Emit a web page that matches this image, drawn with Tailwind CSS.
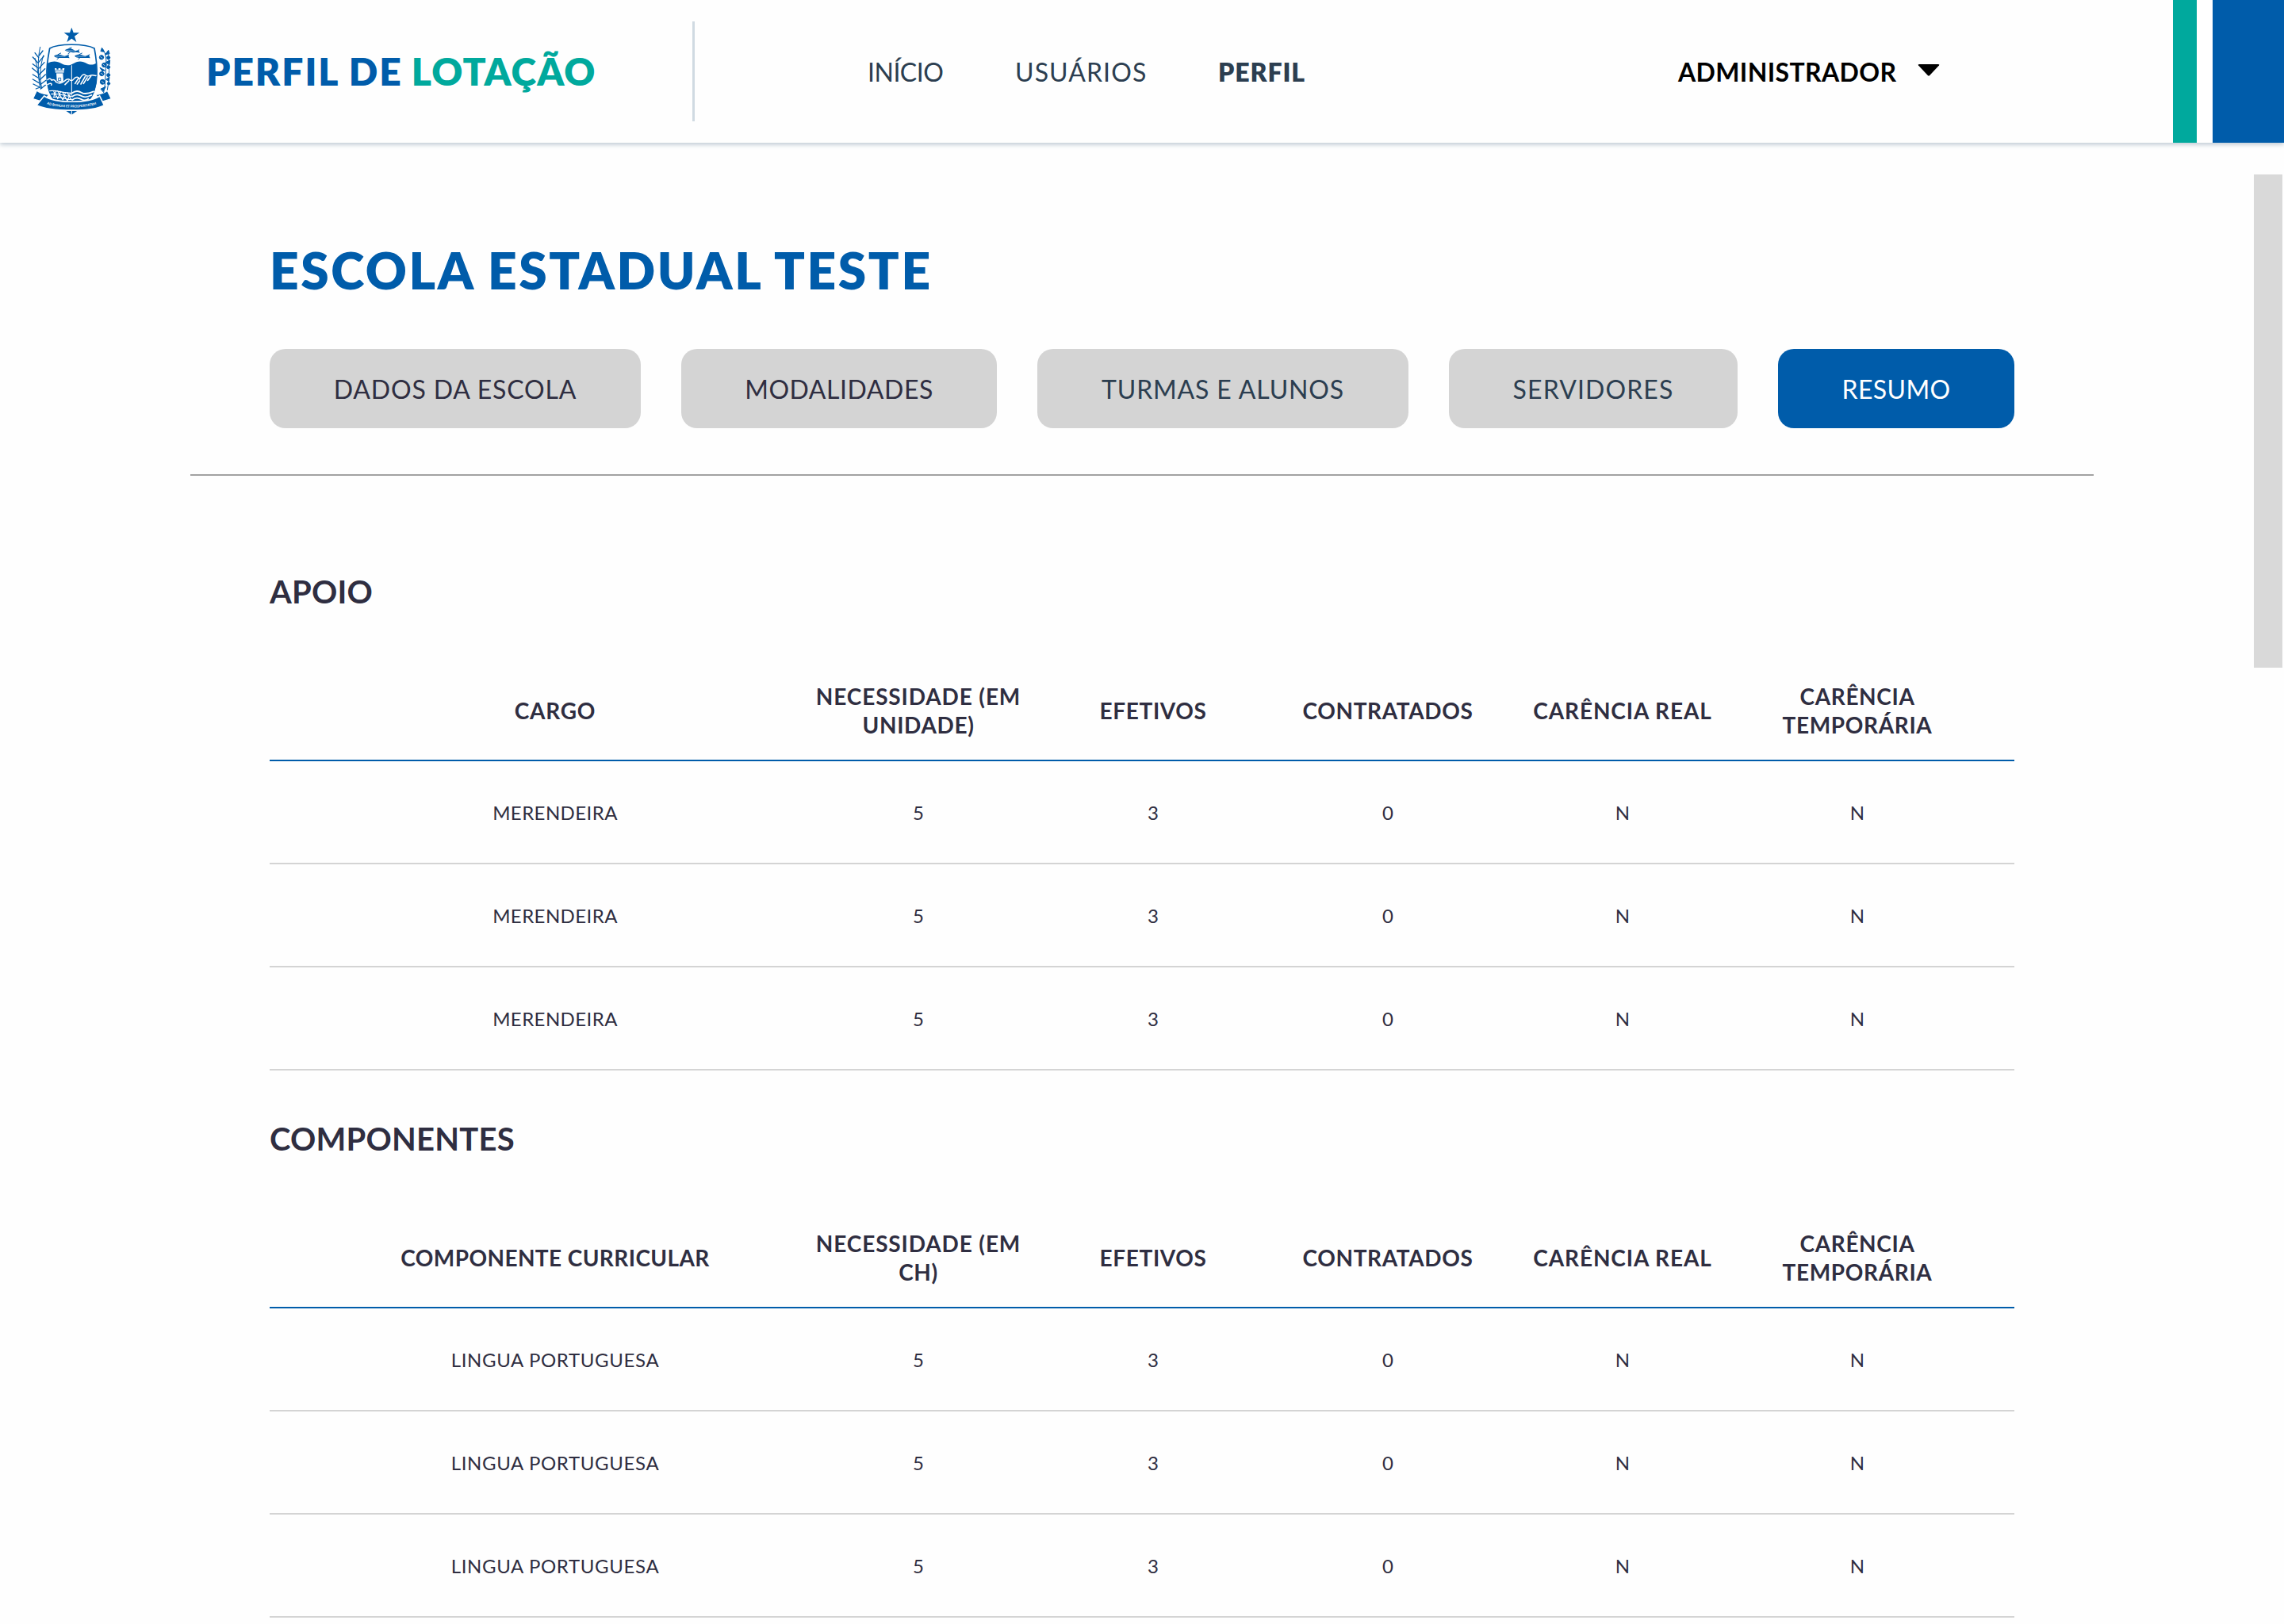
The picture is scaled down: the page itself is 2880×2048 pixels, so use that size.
<!DOCTYPE html>
<html lang="pt-BR">
<head>
<meta charset="utf-8">
<title>Perfil de Lotação</title>
<script src="https://cdn.jsdelivr.net/npm/@tailwindcss/browser@4"></script>
</head>
<body class="h-[2048px] w-[2880px] overflow-hidden bg-[#fefefe] font-['Lato','Noto_Sans',sans-serif] text-[#2f2e41]">

<header class="flex h-[180px] items-center shadow-[0_2px_6px_#b8c5cf] text-[32px] text-[#2c3e50]">
  <svg class="ml-5 size-[140px] shrink-0" viewBox="0 0 420 420" fill="none" stroke-linecap="round">
    <polygon fill="#005caa" points="211,44 218,64 240,64 222,77 229,99 211,86 193,99 200,77 182,64 204,64"/>
    <!-- shield -->
    <path fill="#005caa" d="M120 180C140 168 158 172 172 180C188 189 204 189 220 179C238 168 254 172 268 180C280 187 292 186 304 179C308 230 306 262 296 290C280 330 245 350 211 374C177 350 142 330 126 290C116 262 116 230 120 180Z"/>
    <path stroke="#005caa" stroke-width="5" d="M128 123C160 104 262 104 297 123C304 160 308 190 306 226C305 262 296 294 272 316M128 123C121 160 115 190 117 226C118 262 126 294 150 316"/>
    <!-- fish -->
    <g fill="#005caa">
      <path d="M185 130C194 123 208 121 216 127C224 133 230 134 241 125L238 132L242 140C232 136 222 140 212 138C202 136 194 137 185 130Z"/>
      <path d="M144 152C153 145 167 145 176 149C184 153 192 152 202 145L199 152L203 160C192 157 182 160 172 159C162 158 152 160 144 152Z"/>
      <path d="M222 152C231 145 245 145 254 149C262 153 270 152 280 144L277 151L281 160C270 157 260 160 250 159C240 158 230 160 222 152Z"/>
    </g>
    <path stroke="#005caa" stroke-width="3" d="M200 124L210 120M204 139L198 143M160 146L170 141M162 159L156 164M240 146L250 141M242 159L236 164"/>
    <path stroke="#fefefe" stroke-width="1.5" d="M192 131L226 133M152 153L186 153M230 153L264 153"/>
    <!-- tower -->
    <path fill="#fefefe" d="M147 198H154V203H161V198H169V203H176V198H184L181 215H178L180 247L168 253L155 246L153 215H150Z"/>
    <path stroke="#005caa" stroke-width="2.5" d="M151 208H180M154 216H177M161 244V235H170V244Z"/>
    <!-- hills -->
    <g stroke="#fefefe" stroke-width="4.500" stroke-linejoin="round">
      <path d="M120 242C126 234 132 238 136 244C142 238 148 244 152 248M120 260C130 252 138 256 134 262M150 249C160 257 172 256 182 248C190 240 198 236 204 242C208 246 214 246 220 238C228 228 238 230 241 240C247 226 256 217 264 225C272 233 280 224 288 224C294 224 298 227 303 226"/>
      <path stroke-width="5" d="M186 260L200 246M224 256L237 236M241 246L232 258M246 258L262 230M256 256L270 234M272 244L284 228"/>
    </g>
    <path stroke="#fefefe" stroke-width="3" d="M211 188V300"/>
    <!-- woven field and waves -->
    <g stroke="#fefefe" stroke-width="3.5">
      <path d="M128 284C150 278 180 294 211 292M134 296C160 290 185 306 211 304M142 308C165 302 190 318 211 316M142 284L158 312M158 284L176 316M176 288L194 320M194 290L208 314M152 284L144 304M170 286L158 314M188 290L178 318M206 292L196 320"/>
      <path stroke-width="5.5" d="M213 292C226 282 238 284 248 290C260 298 276 294 294 286M213 305C226 295 238 297 248 303C260 311 272 307 286 300M213 318C226 308 238 310 248 316C256 321 264 320 274 314"/>
    </g>
    <!-- banner -->
    <path fill="#005caa" stroke="#fefefe" stroke-width="4" d="M79 283C90 291 106 297 125 298L104 326L64 314Z"/>
    <path fill="#005caa" stroke="#fefefe" stroke-width="4" d="M346 283C334 291 320 297 302 298L322 326L361 314Z"/>
    <path fill="#005caa" stroke="#fefefe" stroke-width="5" d="M107 303C150 332 274 332 317 303L334 338C290 364 134 364 78 338Z"/>
    <path id="motto" d="M117 334C160 351 265 351 308 333"/>
    <text class="font-bold" font-size="12.5" fill="#fefefe"><textPath href="#motto" textLength="190">AD BONUM ET PROSPERITATEM</textPath></text>
    <path stroke="#fefefe" stroke-width="3" d="M211 360V376"/>
    <!-- cane on the left -->
    <g stroke="#005caa" stroke-width="3">
      <path d="M92 118C82 160 82 220 94 276M104 150C92 190 88 230 98 274M72 160C84 200 86 240 92 270"/>
      <path stroke-width="4" d="M86 158L72 140M88 150L102 132M84 178L64 156M86 176L106 152M82 196L64 182M86 200L108 176M84 216L62 198M88 222L110 200M84 234L64 222M90 242L112 222M88 254L64 240M92 260L114 244M90 270L66 258M94 276L112 262M76 276L92 270"/>
    </g>
    <!-- cotton on the right -->
    <g stroke="#005caa" stroke-width="3">
      <path d="M326 122C342 140 344 170 340 200C338 230 340 256 332 290M350 140C352 180 356 230 346 280"/>
      <g fill="#005caa">
        <circle cx="324" cy="157" r="8"/><circle cx="350" cy="158" r="6"/><circle cx="334" cy="186" r="8"/><circle cx="350" cy="194" r="6"/><circle cx="325" cy="219" r="8"/><circle cx="350" cy="224" r="6"/><circle cx="328" cy="250" r="9"/><circle cx="351" cy="256" r="5"/>
        <path d="M326 122L334 136L322 134ZM338 146L350 130L354 142ZM340 176L356 168L354 184ZM336 206L318 196L326 208ZM342 240L354 232L352 246ZM322 276L340 268L330 286Z"/>
      </g>
      <path stroke="#fefefe" stroke-width="2" d="M320 155L327 160M331 184L337 189M322 217L329 222M325 248L332 253"/>
    </g>
  </svg>
  <div class="ml-[100px] w-[613px] whitespace-nowrap text-5xl font-extrabold text-[#00a99d]"><span class="text-[#005caa] tracking-[1.9px]">PERFIL DE</span> <span class="tracking-[1.1px]">LOTAÇÃO</span></div>
  <div class="h-[126px] w-[3px] bg-[#d0dae2]"></div>
  <nav class="ml-[218px] flex pt-0.5">
    <a class="w-[186px] tracking-[-0.5px]">INÍCIO</a>
    <a class="w-[256px] tracking-[1.1px]">USUÁRIOS</a>
    <a class="w-[580px] font-extrabold tracking-[0.9px]">PERFIL</a>
  </nav>
  <div class="flex items-center pt-0.5 font-bold tracking-[0.35px] text-black">ADMINISTRADOR
    <svg class="mb-1.5 ml-[27px] h-[15px] w-[28px]" viewBox="0 0 28 15"><path d="M2 0H26Q28 0 27 1.500L15 14.300Q14 15 13 14.300L1 1.500Q0 0 2 0Z"/></svg>
  </div>
  <div class="ml-auto flex h-full gap-5 bg-white">
    <div class="w-[30px] bg-[#00a99d]"></div>
    <div class="w-[90px] bg-[#005caa]"></div>
  </div>
</header>

<!-- scrollbar thumb -->
<div class="absolute right-0.5 top-[220px] h-[622px] w-9 bg-[#d9d9d9]"></div>

<main class="mx-auto w-[2400px]">
  <div class="border-b-2 border-[#a1a1a1] px-[100px] pt-[121px] pb-[58px]">
    <h1 class="text-[64px] leading-[80px] font-extrabold tracking-[2.6px] text-[#005caa]">ESCOLA ESTADUAL TESTE</h1>
    <div class="mt-[59px] flex justify-between text-[32px]">
      <button class="flex h-[100px] w-[468px] items-center justify-center rounded-[20px] bg-[#d4d4d4] pt-0.5 tracking-[0.85px]">DADOS DA ESCOLA</button>
      <button class="flex h-[100px] w-[398px] items-center justify-center rounded-[20px] bg-[#d4d4d4] pt-0.5 tracking-[0.55px]">MODALIDADES</button>
      <button class="flex h-[100px] w-[468px] items-center justify-center rounded-[20px] bg-[#d4d4d4] pt-0.5 tracking-[0.85px] text-[#2c3e50]">TURMAS E ALUNOS</button>
      <button class="flex h-[100px] w-[364px] items-center justify-center rounded-[20px] bg-[#d4d4d4] pt-0.5 tracking-[1.1px] text-[#2c3e50]">SERVIDORES</button>
      <button class="flex h-[100px] w-[298px] items-center justify-center rounded-[20px] bg-[#005caa] pt-0.5 tracking-[0.37px] text-white">RESUMO</button>
    </div>
  </div>
  <div id="sections" class="px-[100px] pt-[120px]"></div>
</main>

<script>
const sections = [
  { title: 'APOIO', first: 'CARGO', unit: 'UNIDADE)', item: 'MERENDEIRA', firstTracking: 'tracking-[0.75px]', itemTracking: 'tracking-[0.42px]' },
  { title: 'COMPONENTES', first: 'COMPONENTE CURRICULAR', unit: 'CH)', item: 'LINGUA PORTUGUESA', firstTracking: 'tracking-[0.4px]', itemTracking: 'tracking-[0.64px]' },
];
const grid = 'grid grid-cols-[620px_repeat(5,296px)] items-center px-[50px] pt-0.5 text-center';
document.getElementById('sections').innerHTML = sections.map(s => `
  <section class="pb-[60px]">
    <h2 class="pt-px text-[40px] leading-[50px] font-bold tracking-[0.2px]">${s.title}</h2>
    <div class="${grid} mt-[61px] h-32 border-b-2 border-[#005caa] text-[28px] leading-9 font-bold tracking-[0.63px]">
      <div class="${s.firstTracking}">${s.first}</div><div><span class="tracking-[0.86px]">NECESSIDADE (EM</span><br>${s.unit}</div><div>EFETIVOS</div><div>CONTRATADOS</div><div class="tracking-[0.89px]">CARÊNCIA REAL</div><div>CARÊNCIA<br>TEMPORÁRIA</div>
    </div>
    ${`<div class="${grid} h-[130px] border-b-2 border-[#d4d4d4] text-2xl">
      <div class="${s.itemTracking}">${s.item}</div><div>5</div><div>3</div><div>0</div><div>N</div><div>N</div>
    </div>`.repeat(3)}
  </section>`).join('');
</script>
</body>
</html>
